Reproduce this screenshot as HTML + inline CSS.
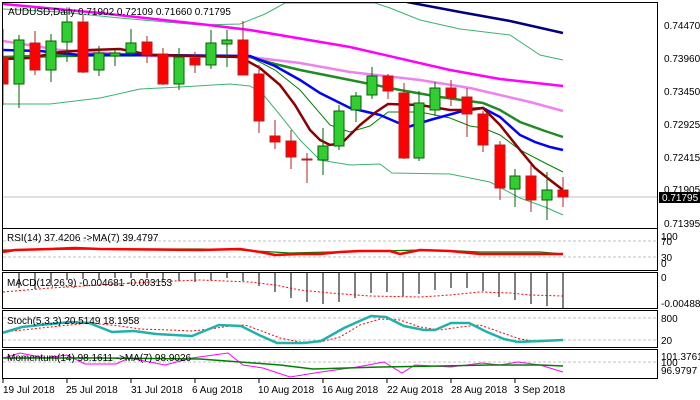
<!DOCTYPE html>
<html><head><meta charset="utf-8"><style>
html,body{margin:0;padding:0;background:#fff;width:700px;height:400px;overflow:hidden}
svg text{font-family:"Liberation Sans",sans-serif;font-size:10px;fill:#000}
</style></head><body>
<svg width="700" height="400" viewBox="0 0 700 400" xmlns="http://www.w3.org/2000/svg">
<rect width="700" height="400" fill="#fff"/>
<defs><clipPath id="m"><rect x="3" y="3" width="654" height="225"/></clipPath></defs>
<g clip-path="url(#m)">
<line x1="3" y1="197" x2="657" y2="197" stroke="#c0c0c0" stroke-width="1"/>
<polyline fill="none" stroke="#3cb371" stroke-width="1" points="3,9 60,12 120,18 200,25 240,24 265,14 285,3 375,3 390,8 420,20 460,29 510,35 540,55 563,60"/>
<polyline fill="none" stroke="#3cb371" stroke-width="1" points="3,104 50,104 100,98 140,89 180,87 230,84 250,86 262,93 280,115 300,140 320,160 350,165 380,164 392,173 450,174 470,178 490,182 520,198 545,207 563,215"/>
<polyline fill="none" stroke="#008000" stroke-width="1" points="3,58 100,56 250,57 275,70 300,90 330,125 350,132 370,126 388,112 420,112 450,118 470,126 483,128 500,135 520,150 545,163 563,172"/>
<polyline fill="none" stroke="#ff00ff" stroke-width="2.5" points="3,4 100,13 200,24 250,30 350,47 450,70 500,79 563,86"/>
<polyline fill="none" stroke="#000080" stroke-width="2.5" points="407,2 460,12 510,21 563,33"/>
<polyline fill="none" stroke="#ee82ee" stroke-width="2.5" points="3,41 60,50 150,56 250,57 300,63 350,72 420,80 470,88 500,95 530,102 563,111"/>
<polyline fill="none" stroke="#228b22" stroke-width="2.5" points="3,57 100,54 250,57 275,64 300,70 350,80 400,90 440,97 483,103 500,110 520,122 545,131 563,137"/>
<polyline fill="none" stroke="#0000ff" stroke-width="2.5" points="3,50 40,51 80,55 150,55 250,56 275,66 300,80 320,93 350,108 380,115 408,127 430,120 470,109 483,108 500,117 520,135 535,142 550,147 563,150"/>
<polyline fill="none" stroke="#8b0000" stroke-width="2.5" points="3,59 30,58 60,52 90,50 120,49 150,55 200,56 240,57 260,68 280,85 295,105 310,130 320,140 330,145 342,143 360,125 376,112 388,104 420,105 450,110 470,110 483,108 500,125 520,150 535,168 550,180 563,190"/>
<g stroke-width="1">
<line x1="3" y1="29" x2="3" y2="105" stroke="#b22222"/><rect x="-2" y="57" width="10" height="27" fill="#f00" stroke="#b22222"/>
<line x1="19" y1="35" x2="19" y2="108" stroke="#006400"/><rect x="14" y="40" width="10" height="44" fill="#32cd32" stroke="#006400"/>
<line x1="35" y1="31" x2="35" y2="75" stroke="#b22222"/><rect x="30" y="43" width="10" height="27" fill="#f00" stroke="#b22222"/>
<line x1="51" y1="34" x2="51" y2="82" stroke="#006400"/><rect x="46" y="41" width="10" height="29" fill="#32cd32" stroke="#006400"/>
<line x1="67" y1="13" x2="67" y2="62" stroke="#006400"/><rect x="62" y="22" width="10" height="20" fill="#32cd32" stroke="#006400"/>
<line x1="83" y1="15" x2="83" y2="73" stroke="#b22222"/><rect x="78" y="22" width="10" height="50" fill="#f00" stroke="#b22222"/>
<line x1="99" y1="46" x2="99" y2="76" stroke="#006400"/><rect x="94" y="53" width="10" height="17" fill="#32cd32" stroke="#006400"/>
<line x1="115" y1="50" x2="115" y2="66" stroke="#006400"/><rect x="110" y="53" width="10" height="3" fill="#32cd32" stroke="#006400"/>
<line x1="131" y1="29" x2="131" y2="55" stroke="#006400"/><rect x="126" y="43" width="10" height="10" fill="#32cd32" stroke="#006400"/>
<line x1="147" y1="36" x2="147" y2="63" stroke="#b22222"/><rect x="142" y="42" width="10" height="13" fill="#f00" stroke="#b22222"/>
<line x1="163" y1="48" x2="163" y2="85" stroke="#b22222"/><rect x="158" y="54" width="10" height="30" fill="#f00" stroke="#b22222"/>
<line x1="179" y1="48" x2="179" y2="90" stroke="#006400"/><rect x="174" y="57" width="10" height="27" fill="#32cd32" stroke="#006400"/>
<line x1="195" y1="52" x2="195" y2="73" stroke="#b22222"/><rect x="190" y="58" width="10" height="7" fill="#f00" stroke="#b22222"/>
<line x1="211" y1="30" x2="211" y2="69" stroke="#006400"/><rect x="206" y="43" width="10" height="22" fill="#32cd32" stroke="#006400"/>
<line x1="227" y1="30" x2="227" y2="67" stroke="#006400"/><rect x="222" y="40" width="10" height="4" fill="#32cd32" stroke="#006400"/>
<line x1="243" y1="21" x2="243" y2="75" stroke="#b22222"/><rect x="238" y="40" width="10" height="35" fill="#f00" stroke="#b22222"/>
<line x1="259" y1="65" x2="259" y2="133" stroke="#b22222"/><rect x="254" y="74" width="10" height="47" fill="#f00" stroke="#b22222"/>
<line x1="275" y1="120" x2="275" y2="149" stroke="#b22222"/><rect x="270" y="136" width="10" height="6" fill="#f00" stroke="#b22222"/>
<line x1="291" y1="130" x2="291" y2="169" stroke="#b22222"/><rect x="286" y="141" width="10" height="16" fill="#f00" stroke="#b22222"/>
<line x1="307" y1="153" x2="307" y2="183" stroke="#b22222"/><rect x="302" y="159" width="10" height="1" fill="#f00" stroke="#b22222"/>
<line x1="323" y1="128" x2="323" y2="175" stroke="#006400"/><rect x="318" y="146" width="10" height="14" fill="#32cd32" stroke="#006400"/>
<line x1="339" y1="105" x2="339" y2="150" stroke="#006400"/><rect x="334" y="111" width="10" height="35" fill="#32cd32" stroke="#006400"/>
<line x1="356" y1="92" x2="356" y2="122" stroke="#006400"/><rect x="351" y="96" width="10" height="14" fill="#32cd32" stroke="#006400"/>
<line x1="372" y1="67" x2="372" y2="99" stroke="#006400"/><rect x="367" y="76" width="10" height="19" fill="#32cd32" stroke="#006400"/>
<line x1="388" y1="74" x2="388" y2="99" stroke="#b22222"/><rect x="383" y="76" width="10" height="15" fill="#f00" stroke="#b22222"/>
<line x1="404" y1="83" x2="404" y2="159" stroke="#b22222"/><rect x="399" y="93" width="10" height="65" fill="#f00" stroke="#b22222"/>
<line x1="419" y1="91" x2="419" y2="161" stroke="#006400"/><rect x="414" y="103" width="10" height="55" fill="#32cd32" stroke="#006400"/>
<line x1="435" y1="82" x2="435" y2="116" stroke="#006400"/><rect x="430" y="88" width="10" height="22" fill="#32cd32" stroke="#006400"/>
<line x1="451" y1="80" x2="451" y2="106" stroke="#b22222"/><rect x="446" y="88" width="10" height="10" fill="#f00" stroke="#b22222"/>
<line x1="467" y1="88" x2="467" y2="137" stroke="#b22222"/><rect x="462" y="97" width="10" height="17" fill="#f00" stroke="#b22222"/>
<line x1="483" y1="111" x2="483" y2="152" stroke="#b22222"/><rect x="478" y="114" width="10" height="31" fill="#f00" stroke="#b22222"/>
<line x1="500" y1="141" x2="500" y2="200" stroke="#b22222"/><rect x="495" y="145" width="10" height="43" fill="#f00" stroke="#b22222"/>
<line x1="515" y1="169" x2="515" y2="207" stroke="#006400"/><rect x="510" y="176" width="10" height="13" fill="#32cd32" stroke="#006400"/>
<line x1="531" y1="165" x2="531" y2="212" stroke="#b22222"/><rect x="526" y="176" width="10" height="24" fill="#f00" stroke="#b22222"/>
<line x1="547" y1="172" x2="547" y2="220" stroke="#006400"/><rect x="542" y="190" width="10" height="10" fill="#32cd32" stroke="#006400"/>
<line x1="563" y1="177" x2="563" y2="207" stroke="#b22222"/><rect x="558" y="190" width="10" height="7" fill="#f00" stroke="#b22222"/>
</g>
</g>
<text x="8" y="15">AUDUSD,Daily  0.71902 0.72109 0.71660 0.71795</text>
<rect x="2.5" y="2.5" width="655" height="226" fill="none" stroke="#000"/>
<g>
<text x="664" y="29">0.74470</text><text x="664" y="62">0.73960</text><text x="664" y="95">0.73450</text><text x="664" y="128">0.72925</text><text x="664" y="161">0.72415</text><text x="664" y="193">0.71905</text><text x="664" y="227">0.71395</text>
<rect x="659" y="192" width="41" height="11" fill="#000"/><text x="662" y="201" style="fill:#fff">0.71795</text>
</g>
<line x1="3" y1="241" x2="657" y2="241" stroke="#c0c0c0" stroke-dasharray="3,2"/>
<line x1="3" y1="257" x2="657" y2="257" stroke="#c0c0c0" stroke-dasharray="3,2"/>
<polyline fill="none" stroke="#008000" stroke-width="1.2" points="3,250 100,249 200,249 240,250 290,253 330,252 380,251 420,250 460,251 480,252 540,252 563,254"/>
<polyline fill="none" stroke="#f00" stroke-width="2.5" points="3,252 15,250 50,249 75,248 100,249 200,250 240,249 260,252 275,255 300,254 320,254 340,252 360,251 390,251 400,254 420,250 450,251 480,254 500,254 540,254 563,254"/>
<text x="7" y="241">RSI(14) 37.4206  -&gt;MA(7) 39.4797</text>
<rect x="2.5" y="228.5" width="655" height="42" fill="none" stroke="#000"/>
<text x="661" y="240">100</text><text x="661" y="245">70</text><text x="661" y="261">30</text><text x="661" y="267">0</text>
<g stroke="#808080" stroke-width="2">
<line x1="19" y1="273" x2="19" y2="288"/><line x1="35" y1="273" x2="35" y2="289"/><line x1="51" y1="273" x2="51" y2="285"/><line x1="67" y1="273" x2="67" y2="280"/><line x1="83" y1="273" x2="83" y2="279"/><line x1="99" y1="273" x2="99" y2="279"/><line x1="115" y1="273" x2="115" y2="278"/><line x1="131" y1="273" x2="131" y2="278"/><line x1="147" y1="273" x2="147" y2="278"/><line x1="163" y1="273" x2="163" y2="279"/><line x1="179" y1="273" x2="179" y2="281"/><line x1="195" y1="273" x2="195" y2="282"/><line x1="211" y1="273" x2="211" y2="280"/><line x1="227" y1="273" x2="227" y2="278"/><line x1="243" y1="273" x2="243" y2="281"/><line x1="259" y1="273" x2="259" y2="286"/><line x1="275" y1="273" x2="275" y2="292"/><line x1="291" y1="273" x2="291" y2="298"/><line x1="307" y1="273" x2="307" y2="302"/><line x1="323" y1="273" x2="323" y2="304"/><line x1="339" y1="273" x2="339" y2="302"/><line x1="355" y1="273" x2="355" y2="298"/><line x1="371" y1="273" x2="371" y2="293"/><line x1="387" y1="273" x2="387" y2="292"/><line x1="403" y1="273" x2="403" y2="296"/><line x1="419" y1="273" x2="419" y2="294"/><line x1="435" y1="273" x2="435" y2="290"/><line x1="451" y1="273" x2="451" y2="288"/><line x1="467" y1="273" x2="467" y2="288"/><line x1="483" y1="273" x2="483" y2="291"/><line x1="499" y1="273" x2="499" y2="297"/><line x1="515" y1="273" x2="515" y2="300"/><line x1="531" y1="273" x2="531" y2="304"/><line x1="547" y1="273" x2="547" y2="306"/><line x1="563" y1="273" x2="563" y2="308"/>
</g>
<polyline fill="none" stroke="#f00" stroke-width="1" stroke-dasharray="2,2" points="3,292 50,288 100,285 150,282 200,280 250,282 275,285 300,290 330,293 370,296 420,297 450,295 480,292 510,293 530,295 563,296"/>
<text x="7" y="286">MACD(12,26,9) -0.004681 -0.003153</text>
<rect x="2.5" y="272.5" width="655" height="36" fill="none" stroke="#000"/>
<text x="661" y="281">0</text><text x="661" y="307">-0.004881</text>
<line x1="3" y1="318" x2="657" y2="318" stroke="#c0c0c0" stroke-dasharray="3,2"/>
<line x1="3" y1="340" x2="657" y2="340" stroke="#c0c0c0" stroke-dasharray="3,2"/>
<polyline fill="none" stroke="#f00" stroke-width="1" stroke-dasharray="2,2" points="3,332 22,330 60,326 90,323 120,326 140,329 170,330 192,331 210,329 230,326 245,325 259,330 280,338 300,342 320,342 340,337 360,325 380,319 400,320 420,327 440,330 460,327 480,325 500,332 520,339 540,342 563,340"/>
<polyline fill="none" stroke="#20b2aa" stroke-width="2.5" points="2,333 22,327 40,325 71,322 89,323 112,332 134,331 156,334 192,336 219,325 241,326 259,335 277,343 304,343 321,341 344,328 371,316 386,317 404,326 424,330 435,330 451,323 469,323 487,332 504,339 518,342 540,341 563,340"/>
<text x="7" y="324">Stoch(5,3,3) 20.5149 18.1958</text>
<rect x="2.5" y="310.5" width="655" height="37" fill="none" stroke="#000"/>
<text x="661" y="322">800</text><text x="661" y="344">20</text>
<line x1="3" y1="362" x2="657" y2="362" stroke="#c0c0c0" stroke-dasharray="3,2"/>
<polyline fill="none" stroke="#ff00ff" stroke-width="1" points="4,358 20,353 45,358 67,355 85,364 116,364 129,358 165,365 192,358 228,353 243,365 263,368 290,377 321,372 357,367 384,362 402,373 415,365 451,367 482,363 500,365 518,362 540,365 563,372"/>
<polyline fill="none" stroke="#008000" stroke-width="1.5" points="3,358 100,358 200,359 240,362 280,365 313,369 380,367 440,366 490,365 540,365 563,366"/>
<text x="7" y="361">Momentum(14) 98.1611  -&gt;MA(7) 98.9026</text>
<rect x="2.5" y="349.5" width="655" height="29" fill="none" stroke="#000"/>
<text x="661" y="360">101.3761</text><text x="661" y="366">100</text><text x="661" y="374">96.9797</text>
<g stroke="#000">
<line x1="3" y1="379" x2="3" y2="383"/><line x1="67" y1="379" x2="67" y2="383"/><line x1="131" y1="379" x2="131" y2="383"/><line x1="195" y1="379" x2="195" y2="383"/><line x1="259" y1="379" x2="259" y2="383"/><line x1="323" y1="379" x2="323" y2="383"/><line x1="387" y1="379" x2="387" y2="383"/><line x1="451" y1="379" x2="451" y2="383"/><line x1="515" y1="379" x2="515" y2="383"/>
</g>
<text x="3" y="393">19 Jul 2018</text><text x="66" y="393">25 Jul 2018</text><text x="131" y="393">31 Jul 2018</text><text x="192" y="393">6 Aug 2018</text><text x="258" y="393">10 Aug 2018</text><text x="322" y="393">16 Aug 2018</text><text x="387" y="393">22 Aug 2018</text><text x="451" y="393">28 Aug 2018</text><text x="514" y="393">3 Sep 2018</text>
</svg>
</body></html>
